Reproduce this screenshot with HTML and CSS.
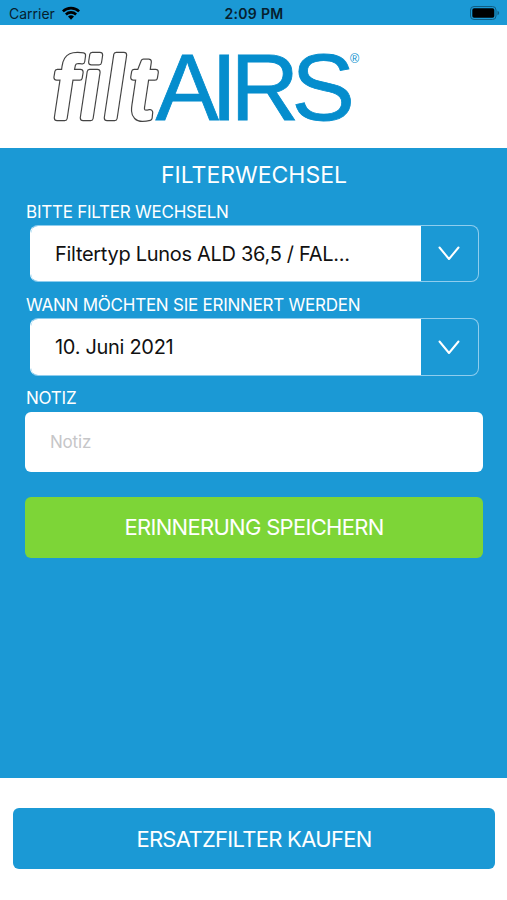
FILE: index.html
```
<!DOCTYPE html>
<html lang="de">
<head>
	<title>filtAIRS</title>
	<meta charset="utf-8">
	<meta name="viewport" content="width=device-width, initial-scale=1">
	<link rel="stylesheet" href="styles.css">
</head>
<body>
	<div class="statusbar">
		<div class="carrier">
			<span>Carrier</span>
			<svg width="18" height="14" viewBox="0 0 18 14">
				<path d="M0 4.4a13 13 0 0 1 18 0l-1.8 1.9a10.4 10.4 0 0 0-14.4 0z"/>
				<path d="M3 7.5a8.7 8.7 0 0 1 12 0l-1.8 1.9a6 6 0 0 0-8.4 0z"/>
				<path d="M6 10.6a4.4 4.4 0 0 1 6 0l-3 3.1z"/>
			</svg>
		</div>
		<span class="time">2:09 PM</span>
		<svg class="battery" width="31" height="14" viewBox="0 0 31 14">
			<rect class="battery-case" x="0.5" y="0.5" width="25.5" height="13" rx="3.5"/>
			<rect x="2.3" y="2.3" width="22" height="9.4" rx="1.8"/>
			<path class="battery-tip" d="M27.5 4.8c2.2.8 2.2 3.6 0 4.4z"/>
		</svg>
	</div>

	<header>
		<svg class="logo" width="507" height="122" viewBox="0 0 507 122">
			<g transform="translate(-4.1 0) skewX(2.5)">
				<g class="logo-outer">
					<text id="filt" class="logo-filt" x="54 81.5 105.5 130.5" y="93">filt</text>
				</g>
				<use class="logo-inner" href="#filt"/>
			</g>
			<text class="logo-airs" x="155.5 211 230.5 291.5" y="95">AIRS</text>
			<text class="logo-reg" x="350" y="38">®</text>
		</svg>
	</header>

	<main>
		<h2>FILTERWECHSEL</h2>

		<label>BITTE FILTER WECHSELN</label>
		<div class="select">
			<span class="value">Filtertyp Lunos ALD 36,5 / FAL...</span>
			<span class="arrow">
				<svg width="22" height="15" viewBox="0 0 22 15"><path d="M1.5 1.5L11 13L20.5 1.5"/></svg>
			</span>
		</div>

		<label>WANN MÖCHTEN SIE ERINNERT WERDEN</label>
		<div class="select">
			<span class="value">10. Juni 2021</span>
			<span class="arrow">
				<svg width="22" height="15" viewBox="0 0 22 15"><path d="M1.5 1.5L11 13L20.5 1.5"/></svg>
			</span>
		</div>

		<label>NOTIZ</label>
		<input class="note" type="text" placeholder="Notiz">

		<button class="save">ERINNERUNG SPEICHERN</button>
	</main>

	<footer>
		<button class="buy">ERSATZFILTER KAUFEN</button>
	</footer>
</body>
</html>
```

FILE: styles.css
```
:root{
	--blue: #1b99d5;
	--logo-blue: #058dcd;
	--green: #7dd537;
}
*{
	margin: 0;
	padding: 0;
	box-sizing: border-box;
}
body{
	height: 900px;
	display: flex;
	flex-direction: column;
	background: white;
	font-family: Inter, "Liberation Sans", sans-serif;
	overflow: hidden;
}
.statusbar{
	height: 25px;
	padding: 2px 7px 0 9px;
	display: grid;
	grid-template-columns: 1fr auto 1fr;
	align-items: center;
	background: var(--blue);
	color: #06202e;
	font-size: 14px;
}
.carrier{
	display: flex;
	align-items: center;
	gap: 7px;
}
.carrier svg{
	fill: black;
	margin-top: -2px;
}
.time{
	margin-right: 1px;
	font-weight: 600;
	letter-spacing: 0.3px;
}
.battery{
	justify-self: end;
	margin: -1px -1px 0 0;
}
.battery-case{
	fill: none;
	stroke: #0f5d82;
}
.battery-tip{
	fill: #0f5d82;
}
header{
	height: 123px;
}
.logo{
	display: block;
	font-family: "Liberation Sans", sans-serif;
}
.logo-filt{
	font-size: 87px;
	font-style: italic;
	stroke-linejoin: round;
}
/* rounded contour: dark rim with a thinner white body on top */
.logo-outer{
	fill: #444;
	stroke: #444;
	stroke-width: 6.4px;
}
.logo-inner{
	fill: white;
	stroke: white;
	stroke-width: 4px;
}
.logo-airs{
	font-size: 95px;
	fill: var(--logo-blue);
	stroke: var(--logo-blue);
	stroke-width: 0.8px;
}
.logo-reg{
	font-size: 12.5px;
	fill: var(--logo-blue);
}
main{
	height: 630px;
	padding: 12px 24px 0 25px;
	display: flex;
	flex-direction: column;
	background: var(--blue);
	color: white;
}
h2{
	height: 30px;
	line-height: 30px;
	font-size: 23px;
	font-weight: 400;
	text-align: center;
}
label{
	height: 36px;
	padding: 11.2px 0 0 1px;
	line-height: 22px;
	font-size: 17px;
	letter-spacing: -0.24px;
	white-space: nowrap;
}
h2 + label{
	height: 35px;
}
.select{
	height: 57.4px;
	margin: 0 4px 0 5px;
	display: flex;
	border: 1px solid #8fcdee;
	border-left-color: white;
	border-radius: 8px;
	overflow: hidden;
}
.value{
	flex: 1;
	padding-left: 24px;
	line-height: 56px;
	background: white;
	color: #111;
	font-size: 20px;
	letter-spacing: -0.3px;
	white-space: nowrap;
}
.arrow{
	width: 57px;
	padding-right: 2px;
	display: flex;
	align-items: center;
	justify-content: center;
}
.arrow svg{
	fill: none;
	stroke: white;
	stroke-width: 2;
	stroke-linecap: round;
	stroke-linejoin: round;
}
.note{
	height: 60px;
	padding-left: 25px;
	border: none;
	border-radius: 6px;
	background: white;
	font-family: inherit;
	font-size: 17px;
	letter-spacing: -0.2px;
}
.note::placeholder{
	color: #c6c6c8;
}
button{
	width: 100%;
	height: 61px;
	border: none;
	border-radius: 6px;
	color: white;
	font-family: inherit;
	font-size: 22px;
	letter-spacing: -0.7px;
}
.save{
	margin-top: 25px;
	background: var(--green);
}
footer{
	padding: 30.4px 12px 0 13px;
}
.buy{
	background: var(--blue);
}
```
